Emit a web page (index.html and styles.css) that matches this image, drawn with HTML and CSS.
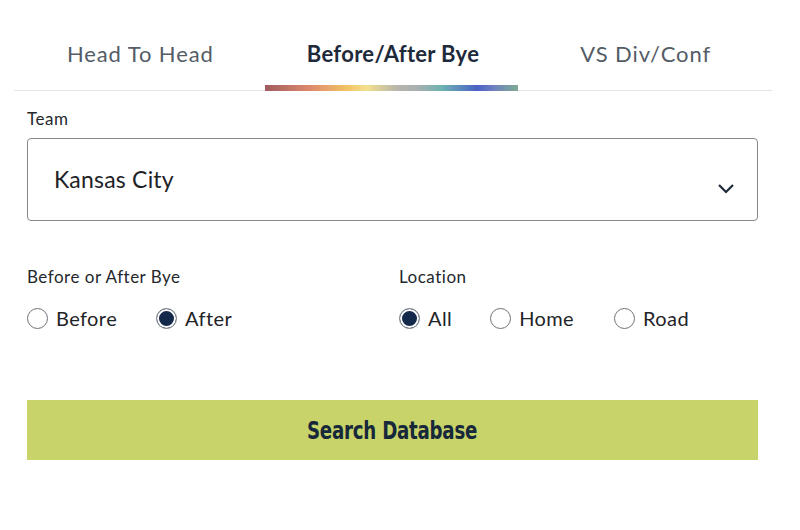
FILE: index.html
```html
<!DOCTYPE html>
<html>
<head>
<meta charset="utf-8">
<link rel="stylesheet" href="styles.css">
</head>
<body>
<div class="page">
  <nav class="tabs">
    <div class="tab">Head To Head</div>
    <div class="tab active">Before/After Bye</div>
    <div class="tab">VS Div/Conf</div>
  </nav>
  <form class="form">
    <label class="label">Team</label>
    <div class="select">
      <span class="select-value">Kansas City</span>
      <svg class="chevron" width="18" height="12" viewBox="0 0 18 12"><path d="M2 3 L9 10 L16 3" fill="none" stroke="#1e2a3a" stroke-width="2.2"/></svg>
    </div>
    <div class="groups">
      <div class="group">
        <div class="label">Before or After Bye</div>
        <div class="radios">
          <span class="radio"><span class="dot"></span>Before</span>
          <span class="radio checked"><span class="dot"></span>After</span>
        </div>
      </div>
      <div class="group">
        <div class="label">Location</div>
        <div class="radios">
          <span class="radio checked"><span class="dot"></span>All</span>
          <span class="radio"><span class="dot"></span>Home</span>
          <span class="radio"><span class="dot"></span>Road</span>
        </div>
      </div>
    </div>
    <div class="button"><span class="button-text">Search Database</span></div>
  </form>
</div>
</body>
</html>
```
FILE: styles.css
```css
* { box-sizing: border-box; }
html, body { margin: 0; padding: 0; background: #fff; }
body { font-family: Lato, "Noto Sans", sans-serif; color: #1f2328; }
.page { width: 800px; height: 530px; padding: 0 14px 0 14px; }
.tabs {
  display: flex;
  width: 758px;
  height: 91px;
  border-bottom: 1px solid #e2e4e6;
}
.tab {
  flex: 1;
  text-align: center;
  font-size: 22px;
  color: #545c66;
  padding-top: 40px;
  line-height: 28px;
  letter-spacing: 0.9px;
  position: relative;
}
.tab.active { color: #1e2a3a; font-weight: 700; letter-spacing: 0.3px; }
.tab.active::after {
  content: "";
  position: absolute;
  left: -2px; right: 1px; bottom: -1px;
  height: 6px;
  background: linear-gradient(90deg, #a15b5e 0%, #de8a6c 18%, #f1c266 32%, #f4e08c 40%, #b8b6ac 52%, #a9b0ae 60%, #6cb2b2 70%, #4c62c4 84%, #6f7fc4 90%, #7fac92 100%);
}
.form { padding: 18px 0 0 13px; width: 744px; }
.label { font-size: 17px; color: #24282c; line-height: 20px; letter-spacing: 0.5px; }
.select {
  margin-top: 9px;
  height: 83px;
  border: 1px solid #85898e;
  border-radius: 4px;
  display: flex;
  align-items: center;
  padding: 0 22px 0 26px;
  justify-content: space-between;
}
.select-value { font-size: 23px; color: #1e2226; margin-top: -2px; letter-spacing: 0.2px; }
.chevron { margin-top: 16px; }
.groups { display: flex; margin-top: 46px; }
.group { width: 372px; flex: none; }
.radios { display: flex; margin-top: 20px; }
.radio {
  display: flex; align-items: center;
  font-size: 20px; color: #1f2328;
  line-height: 22px;
  letter-spacing: 0.4px;
}
.dot {
  width: 21px; height: 21px;
  border: 1px solid #6d7278;
  border-radius: 50%;
  margin-right: 8px;
  background: #fff;
  flex: none;
}
.radio.checked .dot {
  border: 1px solid #8a8e93;
  box-shadow: inset 0 0 0 2px #fff;
  background: #15294a;
}
.group:first-child .radio:nth-child(1) { margin-right: 39px; }
.group:last-child .radio:nth-child(1) { margin-right: 38px; }
.group:last-child .radio:nth-child(2) { margin-right: 40px; }
.button {
  margin-top: 71px;
  height: 60px;
  background: #c8d46a;
  display: flex; align-items: center; justify-content: center;
  color: #16283a;
}
.button-text {
  font-family: "DejaVu Sans Condensed", "DejaVu Sans", sans-serif;
  font-weight: 700;
  font-size: 25px;
  display: inline-block;
  transform: scaleX(0.81);
  letter-spacing: -0.3px;
}
```
